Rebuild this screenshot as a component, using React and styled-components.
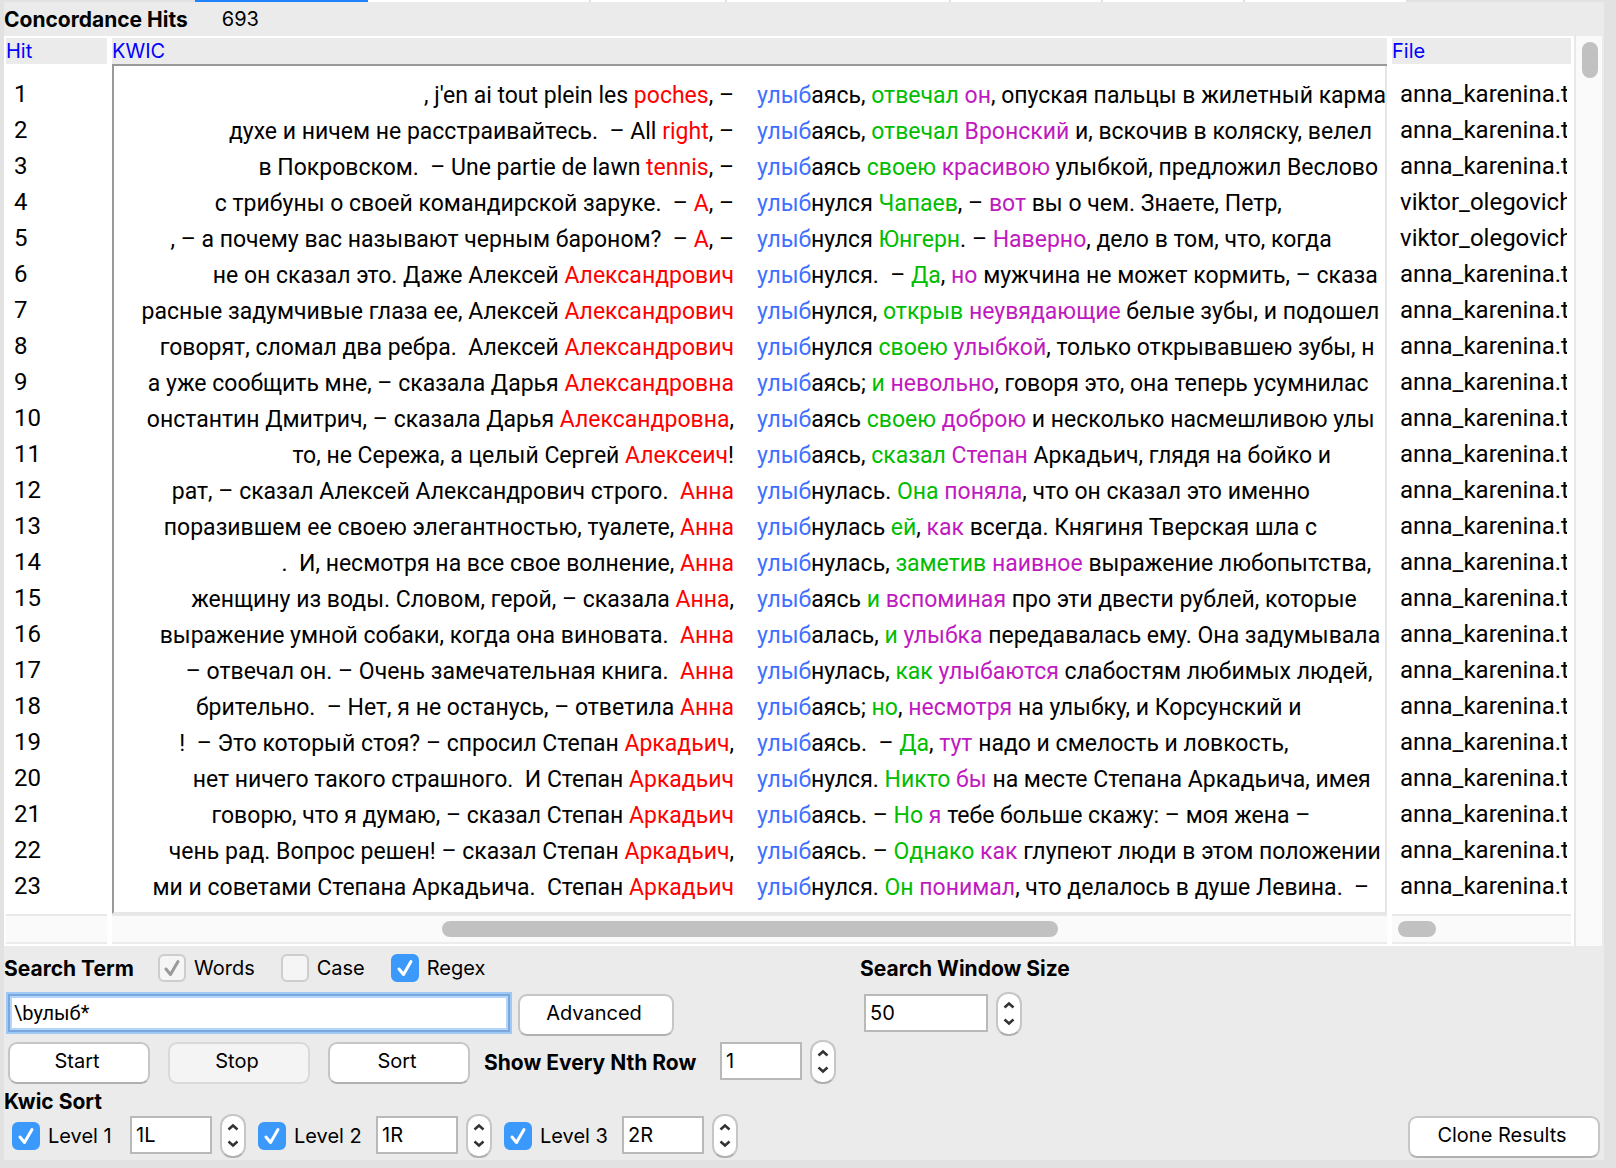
import React, { useState } from "react";
import styled, { createGlobalStyle, css } from "styled-components";

const textFont = 'Roboto, "Liberation Sans", sans-serif';
const uiFont = 'Inter, "Liberation Sans", sans-serif';

const GlobalStyle = createGlobalStyle`
  *, *::before, *::after { box-sizing: border-box; }
  body { margin: 0; background: #e2e2e2; }
`;

const Window = styled.div`
  display: flex;
  flex-direction: column;
  min-height: 100vh;
  font-family: ${uiFont};
  font-size: 20px;
  line-height: 24px;
  color: #000;
  background: #e2e2e2;
`;

const TabStrip = styled.div`
  display: grid;
  grid-template-columns: 195px 173px 223px 136px 224px 152px 142px 163px 1fr;
  height: 2px;
`;

const TabEdge = styled.span`
  background: ${(p) => (p.$kind === "active" ? "#1e82fa" : p.$kind === "tab" ? "#fff" : "#e2e2e2")};
  border-right: ${(p) => (p.$kind === "tab" ? "2px solid #e2e2e2" : "0")};
`;

const Pane = styled.main`
  flex: 1;
  display: flex;
  flex-direction: column;
  margin: 0 12px 8px 4px;
  background: #ebebeb;
`;

const strong = css`
  font-size: 21px;
  font-weight: 700;
`;

const Heading = styled.h1`
  ${strong}
  display: flex;
  gap: 34px;
  height: 34px;
  margin: 0;
  padding-top: 6px;
  line-height: 24px;
`;

const HitCount = styled.output`
  font-size: 20px;
  font-weight: 400;
  line-height: 22px;
`;

const Results = styled.section`
  display: flex;
  background: #fff;
`;

const Sheet = styled.div`
  flex: 1;
  min-width: 0;
  padding-top: 2px;
`;

const Table = styled.table`
  width: 100%;
  table-layout: fixed;
  border-collapse: separate;
  border-spacing: 0;
  font-family: ${textFont};
  font-size: 24px;
  white-space: pre;
`;

const Col = styled.col`
  width: ${(p) => p.$w};
`;

const Th = styled.th`
  padding: 0 3px 0 2px;
  text-align: left;
  font-family: ${uiFont};
  font-size: 20px;
  line-height: 26px;
  font-weight: 400;
  color: #0000ff;
`;

const ThLabel = styled.div`
  height: 28px;
  background: #ebebeb;
  border-bottom: 2px solid ${(p) => (p.$framed ? "#999" : "#fff")};
`;

const Td = styled.td`
  padding: 0 3px 0 2px;
`;

const PlainCell = styled.div`
  height: 36px;
  padding: 0 4px 0 8px;
  line-height: 35px;
  tr:first-child & { height: 47px; padding-top: 11px; }
  tr:last-child & { height: 45px; }
`;

const Clip = styled.div`
  overflow: hidden;
`;

const KwicCell = styled.div`
  display: grid;
  grid-template-columns: 620px 1fr;
  column-gap: 23px;
  height: 36px;
  font-size: 23px;
  line-height: 38px;
  border-left: 2px solid #999;
  border-right: 2px solid #e6e6e6;
  overflow: hidden;
  tr:first-child & { height: 47px; padding-top: 11px; }
  tr:last-child & { height: 45px; border-bottom: 2px solid #e6e6e6; }
`;

const LeftContext = styled.span`
  text-align: right;
`;

const RightContext = styled.span`
  min-width: 0;
  overflow: hidden;
`;

const tones = { l1: "#ff0000", r1: "#00bd00", r2: "#bf1abf", stem: "#4070ff" };
const Word = styled.span`
  color: ${(p) => tones[p.$tone]};
`;

const Tracks = styled.div`
  display: grid;
  grid-template-columns: 101px 1fr 179px;
  gap: 5px;
  padding: 0 3px 2px 2px;
`;

const Track = styled.div`
  height: 30px;
  display: grid;
  grid-template-columns: ${(p) => p.$cols || "1fr"};
  align-items: center;
  background: #fafafa;
  border-top: 2px solid #e8e8e8;
  border-bottom: 2px solid #ececec;
`;

const Thumb = styled.span`
  grid-column: 2;
  height: 16px;
  border-radius: 8px;
  background: #c1c1c1;
`;

const SideTrack = styled.div`
  width: 30px;
  padding: 6px 6px 0;
  background: #fafafa;
  border-left: 2px solid #e8e8e8;
  border-right: 2px solid #ebebeb;
`;

const SideThumb = styled.div`
  height: 36px;
  width: 16px;
  border-radius: 8px;
  background: #c1c1c1;
`;

const Controls = styled.form`
  flex: 1;
  display: flex;
  padding: 8px 4px 2px 0;
`;

const LeftControls = styled.div`
  width: 856px;
`;

const RightControls = styled.div`
  flex: 1;
`;

const Row = styled.div`
  display: flex;
  align-items: ${(p) => p.$align || "flex-start"};
  justify-content: ${(p) => p.$justify || "flex-start"};
  height: ${(p) => p.$h || 44}px;
  padding-left: ${(p) => p.$indent || 0}px;
  gap: ${(p) => p.$gap || 8}px;
  margin-bottom: ${(p) => p.$after || 0}px;
`;

const Title = styled.span`
  ${strong}
`;

const TitleLabel = styled.label`
  ${strong}
  width: ${(p) => (p.$w ? `${p.$w}px` : "auto")};
  line-height: ${(p) => p.$lh || 28}px;
  white-space: nowrap;
`;

const CheckLabel = styled.label`
  display: flex;
  align-items: center;
  gap: 8px;
  width: ${(p) => (p.$w ? `${p.$w}px` : "auto")};
  height: 28px;
`;

const CheckFrame = styled.span`
  display: grid;
  width: 28px;
  height: 28px;
  > * { grid-area: 1 / 1; }
`;

const CheckInput = styled.input`
  appearance: none;
  width: 28px;
  height: 28px;
  margin: 0;
  border: 2px solid #cdcdcd;
  border-radius: 6px;
  background: #f5f5f5;
  &:checked:not(:disabled) { background: #3b99fc; border-color: #3b99fc; }
`;

const Tick = styled.svg`
  pointer-events: none;
  width: 28px;
  height: 28px;
  fill: none;
  stroke: ${(p) => (p.$dim ? "#999" : "#fff")};
  stroke-width: 3;
  stroke-linecap: round;
  stroke-linejoin: round;
`;

const Field = styled.input`
  width: ${(p) => p.$w}px;
  height: 38px;
  margin: 2px 0 0;
  padding: 0 4px;
  border: 2px solid #b9b9b9;
  border-radius: 0;
  background: #fff;
  font: 400 20px/24px ${uiFont};
  color: #000;
  outline: none;
`;

const SearchField = styled(Field)`
  border-color: #7ba8dc;
  box-shadow: 0 0 0 2px #a0c8f4, inset 0 0 0 2px #b3d5fb;
  font-family: ${textFont};
`;

const Button = styled.button`
  width: ${(p) => p.$w}px;
  height: 42px;
  margin: 2px 0 0;
  padding: 0 4px 4px 0;
  border: 2px solid #c6c6c6;
  border-bottom-color: #b0b0b0;
  border-radius: 9px;
  background: #fff;
  font: 400 20px/24px ${uiFont};
  color: #000;
  &:disabled { background: #f4f4f4; border-color: #d9d9d9; color: #000; }
`;

const Stepper = styled.span`
  display: flex;
  flex-direction: column;
  width: 26px;
  height: 44px;
  padding: 2px 0 4px;
  border: 2px solid #c6c6c6;
  border-bottom-color: #b0b0b0;
  border-radius: 12px;
  background: #fff;
`;

const StepButton = styled.button`
  flex: 1;
  display: grid;
  place-items: center;
  padding: 0;
  border: 0;
  background: none;
  svg { width: 12px; height: 8px; fill: none; stroke: #333; stroke-width: 2.500; }
`;

const hits = [
  [", j'en ai tout plein les ", "poches", ", –", "аясь, ", "отвечал", " ", "он", ", опуская пальцы в жилетный карма"],
  ["духе и ничем не расстраивайтесь.  – All ", "right", ", –", "аясь, ", "отвечал", " ", "Вронский", " и, вскочив в коляску, велел"],
  ["в Покровском.  – Une partie de lawn ", "tennis", ", –", "аясь ", "своею", " ", "красивою", " улыбкой, предложил Веслово"],
  ["с трибуны о своей командирской заруке.  – ", "А", ", –", "нулся ", "Чапаев", ", – ", "вот", " вы о чем. Знаете, Петр,"],
  [", – а почему вас называют черным бароном?  – ", "А", ", –", "нулся ", "Юнгерн", ". – ", "Наверно", ", дело в том, что, когда"],
  ["не он сказал это. Даже Алексей ", "Александрович", "", "нулся.  – ", "Да", ", ", "но", " мужчина не может кормить, – сказа"],
  ["расные задумчивые глаза ее, Алексей ", "Александрович", "", "нулся, ", "открыв", " ", "неувядающие", " белые зубы, и подошел"],
  ["говорят, сломал два ребра.  Алексей ", "Александрович", "", "нулся ", "своею", " ", "улыбкой", ", только открывавшею зубы, н"],
  ["а уже сообщить мне, – сказала Дарья ", "Александровна", "", "аясь; ", "и", " ", "невольно", ", говоря это, она теперь усумнилас"],
  ["онстантин Дмитрич, – сказала Дарья ", "Александровна", ",", "аясь ", "своею", " ", "доброю", " и несколько насмешливою улы"],
  ["то, не Сережа, а целый Сергей ", "Алексеич", "!", "аясь, ", "сказал", " ", "Степан", " Аркадьич, глядя на бойко и"],
  ["рат, – сказал Алексей Александрович строго.  ", "Анна", "", "нулась. ", "Она", " ", "поняла", ", что он сказал это именно"],
  ["поразившем ее своею элегантностью, туалете, ", "Анна", "", "нулась ", "ей", ", ", "как", " всегда. Княгиня Тверская шла с"],
  [".  И, несмотря на все свое волнение, ", "Анна", "", "нулась, ", "заметив", " ", "наивное", " выражение любопытства,"],
  ["женщину из воды. Словом, герой, – сказала ", "Анна", ",", "аясь ", "и", " ", "вспоминая", " про эти двести рублей, которые"],
  ["выражение умной собаки, когда она виновата.  ", "Анна", "", "алась, ", "и", " ", "улыбка", " передавалась ему. Она задумывала"],
  ["– отвечал он. – Очень замечательная книга.  ", "Анна", "", "нулась, ", "как", " ", "улыбаются", " слабостям любимых людей,"],
  ["брительно.  – Нет, я не останусь, – ответила ", "Анна", "", "аясь; ", "но", ", ", "несмотря", " на улыбку, и Корсунский и"],
  ["!  – Это который стоя? – спросил Степан ", "Аркадьич", ",", "аясь.  – ", "Да", ", ", "тут", " надо и смелость и ловкость,"],
  ["нет ничего такого страшного.  И Степан ", "Аркадьич", "", "нулся. ", "Никто", " ", "бы", " на месте Степана Аркадьича, имея"],
  ["говорю, что я думаю, – сказал Степан ", "Аркадьич", "", "аясь. – ", "Но", " ", "я", " тебе больше скажу: – моя жена –"],
  ["чень рад. Вопрос решен! – сказал Степан ", "Аркадьич", ",", "аясь. – ", "Однако", " ", "как", " глупеют люди в этом положении"],
  ["ми и советами Степана Аркадьича.  Степан ", "Аркадьич", "", "нулся. ", "Он", " ", "понимал", ", что делалось в душе Левина.  –"],
];

const fileOf = (i) => (i === 3 || i === 4 ? "viktor_olegovich" : "anna_karenina.t");

function Check({ label, on, w, disabled }) {
  const [checked, setChecked] = useState(on);
  return (
    <CheckLabel $w={w}>
      <CheckFrame>
        <CheckInput type="checkbox" checked={checked} disabled={disabled} onChange={(e) => setChecked(e.target.checked)} />
        {checked && (
          <Tick $dim={disabled} viewBox="0 0 28 28" aria-hidden="true">
            <path d="M8 15l4.500 5.500L20 7.500" />
          </Tick>
        )}
      </CheckFrame>
      {label}
    </CheckLabel>
  );
}

function StepControl({ label }) {
  return (
    <Stepper>
      <StepButton type="button" aria-label={`${label} up`}>
        <svg viewBox="0 0 12 8"><path d="M1.500 6.500L6 2.500l4.500 4" /></svg>
      </StepButton>
      <StepButton type="button" aria-label={`${label} down`}>
        <svg viewBox="0 0 12 8"><path d="M1.500 1.500L6 5.500l4.500-4" /></svg>
      </StepButton>
    </Stepper>
  );
}

const strip = ["off", "active", "tab", "tab", "tab", "tab", "tab", "tab", "off"];

export default function App() {
  return (
    <Window>
      <GlobalStyle />
      <TabStrip>
        {strip.map((kind, i) => <TabEdge key={i} $kind={kind} />)}
      </TabStrip>
      <Pane>
        <Heading>Concordance Hits <HitCount>693</HitCount></Heading>
        <Results>
          <Sheet>
            <Table>
              <colgroup>
                <Col $w="106px" />
                <Col $w="auto" />
                <Col $w="184px" />
              </colgroup>
              <thead>
                <tr>
                  <Th scope="col"><ThLabel>Hit</ThLabel></Th>
                  <Th scope="col"><ThLabel $framed>KWIC</ThLabel></Th>
                  <Th scope="col"><ThLabel>File</ThLabel></Th>
                </tr>
              </thead>
              <tbody>
                {hits.map(([left, l1, gapL, tail, r1, gapR, r2, rest], i) => (
                  <tr key={i}>
                    <Td><PlainCell>{i + 1}</PlainCell></Td>
                    <Td>
                      <KwicCell>
                        <LeftContext>{left}<Word $tone="l1">{l1}</Word>{gapL}</LeftContext>
                        <RightContext>
                          <Word $tone="stem">улыб</Word>{tail}
                          <Word $tone="r1">{r1}</Word>{gapR}
                          <Word $tone="r2">{r2}</Word>{rest}
                        </RightContext>
                      </KwicCell>
                    </Td>
                    <Td><PlainCell><Clip>{fileOf(i)}</Clip></PlainCell></Td>
                  </tr>
                ))}
              </tbody>
            </Table>
            <Tracks>
              <Track />
              <Track $cols="330px 616px 1fr"><Thumb /></Track>
              <Track $cols="6px 38px 1fr"><Thumb /></Track>
            </Tracks>
          </Sheet>
          <SideTrack><SideThumb /></SideTrack>
        </Results>
        <Controls onSubmit={(e) => e.preventDefault()}>
          <LeftControls>
            <Row $h={28} $gap={26} $after={10}>
              <TitleLabel htmlFor="term" $w={128} $lh={30}>Search Term</TitleLabel>
              <Check label="Words" on disabled />
              <Check label="Case" on={false} />
              <Check label="Regex" on />
            </Row>
            <Row $indent={4} $after={4}>
              <SearchField id="term" $w={502} defaultValue="\bулыб*" />
              <Button type="button" $w={156}>Advanced</Button>
            </Row>
            <Row $indent={4} $gap={14}>
              <Row $gap={18}>
                <Button type="submit" $w={142}>Start</Button>
                <Button type="button" $w={142} disabled>Stop</Button>
                <Button type="button" $w={142}>Sort</Button>
              </Row>
              <Row>
                <TitleLabel htmlFor="nth" $w={228} $lh={46}>Show Every Nth Row</TitleLabel>
                <Field id="nth" $w={82} defaultValue="1" />
                <StepControl label="Row interval" />
              </Row>
            </Row>
            <Row $h={30} $align="flex-end"><Title>Kwic Sort</Title></Row>
            <Row $indent={8} $gap={12} $align="center">
              {["1L", "1R", "2R"].map((v, i) => (
                <Row key={v}>
                  <Row $align="center"><Check label={`Level ${i + 1}`} on w={110} /></Row>
                  <Field aria-label={`Level ${i + 1} position`} $w={82} defaultValue={v} />
                  <StepControl label={`Level ${i + 1}`} />
                </Row>
              ))}
            </Row>
          </LeftControls>
          <RightControls>
            <Row $h={28} $after={10}>
              <TitleLabel htmlFor="win" $lh={30}>Search Window Size</TitleLabel>
            </Row>
            <Row $indent={4} $after={78}>
              <Field id="win" $w={124} defaultValue="50" />
              <StepControl label="Window size" />
            </Row>
            <Row $justify="flex-end">
              <Button type="button" $w={192}>Clone Results</Button>
            </Row>
          </RightControls>
        </Controls>
      </Pane>
    </Window>
  );
}
